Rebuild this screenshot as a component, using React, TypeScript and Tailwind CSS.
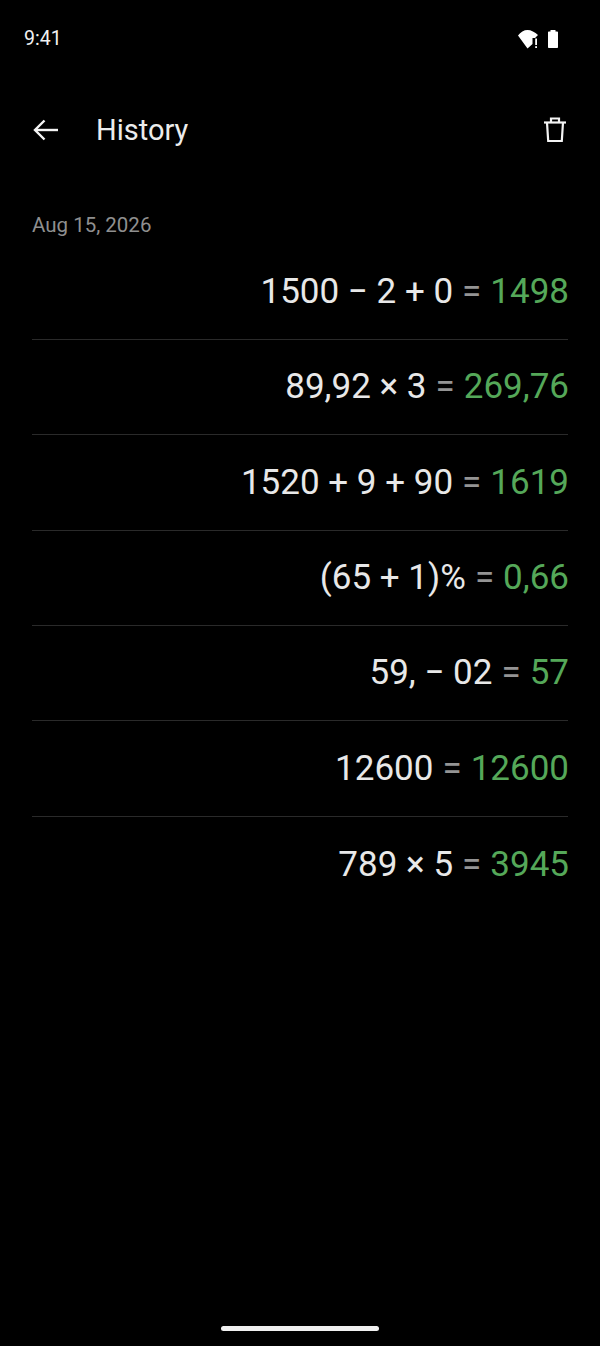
import React from "react";

interface HistoryRow {
  expr: string;
  result: string;
}

const rows: HistoryRow[] = [
  { expr: "1500 − 2 + 0", result: "1498" },
  { expr: "89,92 × 3", result: "269,76" },
  { expr: "1520 + 9 + 90", result: "1619" },
  { expr: "(65 + 1)%", result: "0,66" },
  { expr: "59, − 02", result: "57" },
  { expr: "12600", result: "12600" },
  { expr: "789 × 5", result: "3945" },
];

const StatusIcons = () => (
  <div className="flex items-center gap-[8px] mt-[2px]">
    <svg width="22" height="20" viewBox="0 0 22 20" fill="none">
      <path d="M1 6.5C3.5 3 7 1 10.5 1 14 1 18 3 21 6l-3 3h-2.5v6L10.5 19.5z" fill="#fff" />
      <rect x="18.2" y="9.5" width="1.8" height="6.5" fill="#fff" />
      <rect x="18.2" y="17.2" width="1.8" height="1.8" fill="#fff" />
    </svg>
    <svg width="12" height="20" viewBox="0 0 12 20" fill="#fff">
      <path d="M3.5 1h5v1.5h1.7a.8.8 0 0 1 .8.8v15a.8.8 0 0 1-.8.8H1.8a.8.8 0 0 1-.8-.8v-15a.8.8 0 0 1 .8-.8h1.7z" />
    </svg>
  </div>
);

const BackIcon = () => (
  <svg width="28" height="28" viewBox="0 0 28 28" fill="none" stroke="#f4f4f4" strokeWidth="2.4">
    <path d="M26 14H3" />
    <path d="M12.5 4.5 3 14l9.5 9.5" />
  </svg>
);

const TrashIcon = () => (
  <svg width="26" height="28" viewBox="0 0 26 28" fill="none" stroke="#f4f4f4" strokeWidth="2.2">
    <path d="M2 6.5h22" />
    <path d="M9 6V2.5h8V6" />
    <path d="M5 6.5l1.2 18.5h13.6L21 6.5" />
  </svg>
);

export default function App() {
  return (
    <div className="w-[600px] h-[1346px] bg-black flex flex-col font-['Roboto',sans-serif] text-white">
      {/* Status bar */}
      <div className="h-[78px] pl-6 pr-[41px] pt-[27px] flex justify-between items-start">
        <span className="text-[19.5px] leading-6 text-[#f2f2f2]">9:41</span>
        <StatusIcons />
      </div>

      {/* Toolbar */}
      <div className="h-[104px] pl-8 pr-8 flex items-center">
        <BackIcon />
        <span className="ml-[36px] text-[29px] leading-9 text-[#ececec]">History</span>
        <div className="ml-auto">
          <TrashIcon />
        </div>
      </div>

      <div className="px-8 flex-1">
        <div className="mt-[29px] text-[20.5px] leading-7 text-[#8f8f8f]">Aug 15, 2026</div>

        <div className="mt-[5.4px]">
          {rows.map((row, i) => (
            <div
              key={row.expr}
              className={`h-[95.4px] pt-[1px] flex items-center justify-end text-[35px] ${i < rows.length - 1 ? "border-b border-[#2a2a2a]" : ""}`}
            >
              <span className="text-[#e8e8e8]">{row.expr}</span>
              <span className="text-[#949494] mx-[9px]">=</span>
              <span className="text-[#55a859] mr-[-1px]">{row.result}</span>
            </div>
          ))}
        </div>
      </div>

      {/* Gesture bar */}
      <div className="h-[20px] flex justify-center">
        <div className="w-[158px] h-[5px] rounded-full bg-[#f0f0f0]" />
      </div>
    </div>
  );
}
